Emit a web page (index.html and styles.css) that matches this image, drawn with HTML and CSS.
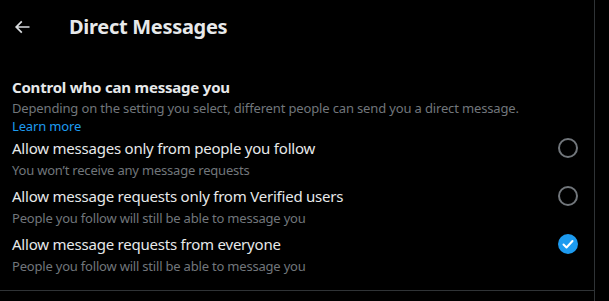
FILE: index.html
```html
<!DOCTYPE html>
<html>
<head>
<meta charset="utf-8">
<link rel="stylesheet" href="styles.css">
</head>
<body>
<div class="column">
  <header class="topbar">
    <button class="back" aria-label="Back">
      <svg viewBox="0 0 24 24" width="20" height="20"><path fill="currentColor" d="M7.414 13l5.043 5.04-1.414 1.42L3.586 12l7.457-7.46 1.414 1.42L7.414 11H21v2H7.414z"/></svg>
    </button>
    <h1 class="title">Direct Messages</h1>
  </header>
  <section class="intro">
    <h2 class="heading">Control who can message you</h2>
    <p class="desc">Depending on the setting you select, different people can send you a direct message.</p>
    <a class="link" href="#">Learn more</a>
  </section>
  <div class="options">
    <label class="option">
      <div class="text">
        <div class="opt-title">Allow messages only from people you follow</div>
        <div class="opt-sub">You won’t receive any message requests</div>
      </div>
      <span class="radio"></span>
    </label>
    <label class="option">
      <div class="text">
        <div class="opt-title">Allow message requests only from Verified users</div>
        <div class="opt-sub">People you follow will still be able to message you</div>
      </div>
      <span class="radio"></span>
    </label>
    <label class="option">
      <div class="text">
        <div class="opt-title">Allow message requests from everyone</div>
        <div class="opt-sub">People you follow will still be able to message you</div>
      </div>
      <span class="radio checked">
        <svg viewBox="0 0 20 20" width="20" height="20"><path d="M5.5 10.5l3 3 6-6.5" fill="none" stroke="#fff" stroke-width="2" stroke-linecap="round" stroke-linejoin="round"/></svg>
      </span>
    </label>
  </div>
</div>
</body>
</html>
```
FILE: styles.css
```css
html, body {
  margin: 0;
  padding: 0;
  background: #000;
  height: 100%;
}
body {
  font-family: "Noto Sans", "Open Sans", sans-serif;
  color: #e7e9ea;
}
.column {
  width: 595px;
  border-right: 1px solid #2f3336;
  min-height: 100%;
  box-sizing: border-box;
}
.topbar {
  height: 53px;
  display: flex;
  align-items: center;
  padding-left: 12px;
}
.back {
  background: none;
  border: 0;
  padding: 0;
  width: 20px;
  height: 20px;
  color: #d9dcdf;
  display: flex;
}
.title {
  margin: 0 0 0 37px;
  font-size: 20px;
  font-weight: 700;
  line-height: 24px;
  letter-spacing: -0.3px;
}
.intro {
  padding: 24px 12px 0;
}
.heading {
  margin: 0;
  font-size: 15px;
  font-weight: 700;
  line-height: 20px;
  letter-spacing: -0.2px;
}
.desc {
  margin: 2px 0 0;
  font-size: 13px;
  line-height: 18px;
  color: #71767b;
  letter-spacing: -0.15px;
}
.link {
  display: block;
  width: max-content;
  font-size: 13px;
  line-height: 18px;
  color: #1d9bf0;
  text-decoration: none;
  letter-spacing: -0.15px;
}
.options {
  margin-top: -1px;
  padding-bottom: 12px;
  border-bottom: 1px solid #2f3336;
}
.option {
  display: flex;
  justify-content: space-between;
  align-items: flex-start;
  padding: 4px 16px 4px 12px;
}
.opt-title {
  font-size: 15px;
  line-height: 20px;
  letter-spacing: -0.22px;
}
.opt-sub {
  margin-top: 4px;
  font-size: 13px;
  line-height: 16px;
  color: #71767b;
  letter-spacing: -0.2px;
}
.radio {
  width: 20px;
  height: 20px;
  box-sizing: border-box;
  border: 2px solid #71767b;
  border-radius: 50%;
  flex: none;
  display: flex;
}
.radio.checked {
  border: 0;
  background: #1d9bf0;
}
```
